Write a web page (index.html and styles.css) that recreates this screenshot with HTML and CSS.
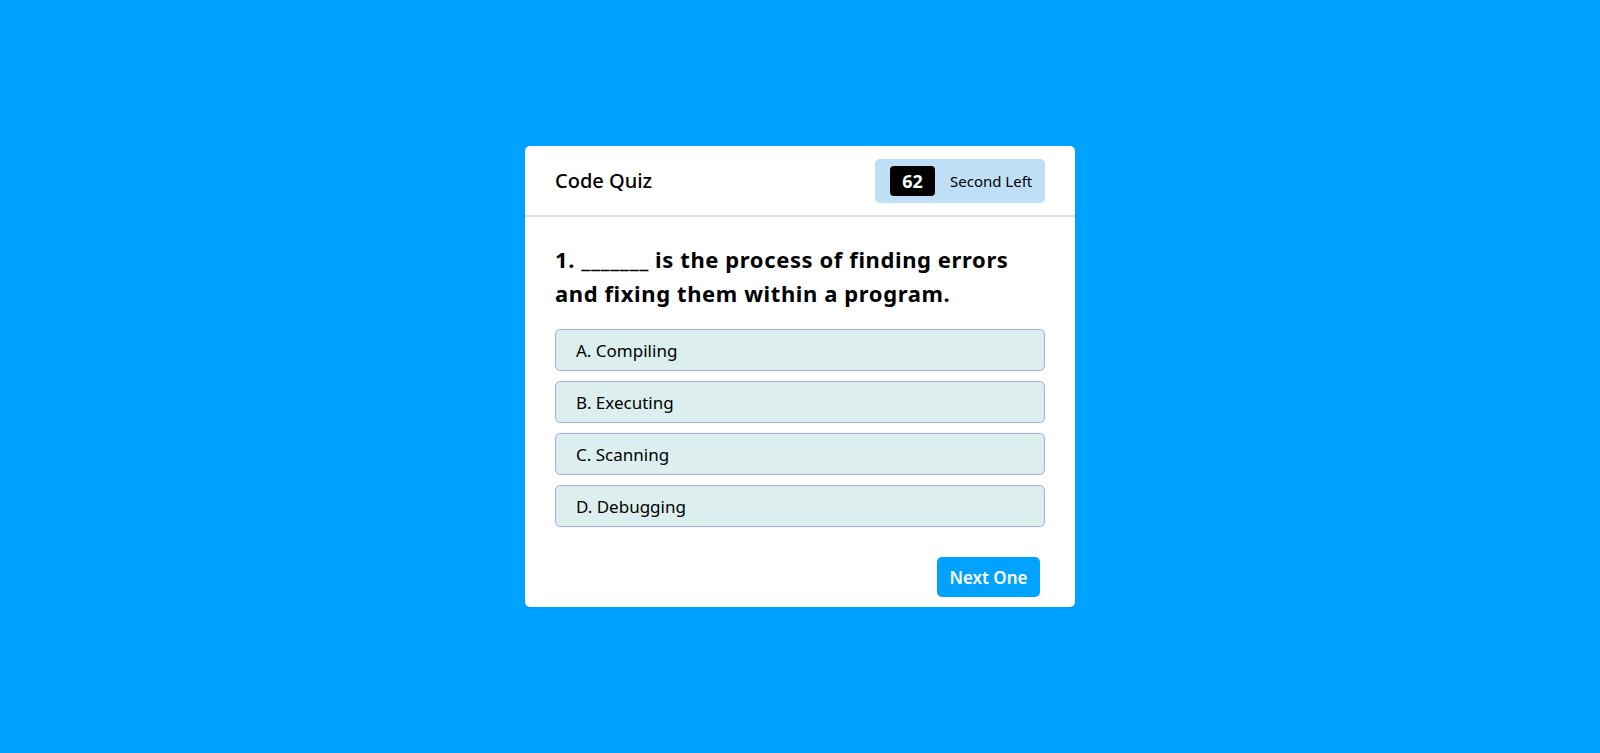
FILE: index.html
```html
<!DOCTYPE html>
<html lang="en">
<head>
<meta charset="utf-8">
<title>Code Quiz</title>
<link rel="stylesheet" href="styles.css">
</head>
<body>
<div class="quiz">
  <header class="quiz-header">
    <div class="title">Code Quiz</div>
    <div class="timer">
      <span class="timer-count">62</span>
      <span class="timer-label">Second Left</span>
    </div>
  </header>
  <section class="quiz-body">
    <h2 class="question">1. _______ is the process of finding errors and fixing them within a program.</h2>
    <div class="options">
      <div class="option">A. Compiling</div>
      <div class="option">B. Executing</div>
      <div class="option">C. Scanning</div>
      <div class="option">D. Debugging</div>
    </div>
    <div class="quiz-footer">
      <button class="next-btn">Next One</button>
    </div>
  </section>
</div>
</body>
</html>
```
FILE: styles.css
```css
* { box-sizing: border-box; }
html, body { margin: 0; height: 100%; }
body {
  background: #00a2ff;
  font-family: "Noto Sans", "Open Sans", sans-serif;
  color: #000;
  display: flex;
  align-items: center;
  justify-content: center;
}
.quiz {
  width: 550px;
  background: #fff;
  border-radius: 5px;
}
.quiz-header {
  height: 71px;
  padding: 0 30px;
  border-bottom: 2px solid #dddddd;
  display: flex;
  align-items: center;
  justify-content: space-between;
}
.title {
  font-size: 20px;
  font-weight: 500;
}
.timer {
  width: 170px;
  height: 44px;
  background: #bfdff7;
  border-radius: 5px;
  display: flex;
  align-items: center;
  padding-left: 15px;
  gap: 15px;
}
.timer-count {
  width: 45px;
  height: 30px;
  background: #000;
  color: #fff;
  border-radius: 4px;
  font-size: 18px;
  font-weight: 700;
  display: flex;
  align-items: center;
  justify-content: center;
}
.timer-label {
  font-size: 15px;
}
.quiz-body {
  padding: 25px 30px 10px;
}
.question {
  margin: 0 0 19px;
  max-width: 475px;
  font-size: 22px;
  line-height: 34px;
  font-weight: 700;
  letter-spacing: 0.6px;
}
.options {
  display: flex;
  flex-direction: column;
  gap: 10px;
}
.option {
  height: 42px;
  background: #dcefee;
  border: 1px solid #a5ade6;
  border-radius: 5px;
  padding: 0 20px;
  display: flex;
  align-items: center;
  font-size: 17px;
}
.quiz-footer {
  display: flex;
  justify-content: flex-end;
  margin-top: 30px;
  padding-right: 5px;
}
.next-btn {
  width: 103px;
  height: 40px;
  background: #00a2ff;
  color: #fff;
  border: none;
  border-radius: 5px;
  font-family: inherit;
  font-size: 17px;
  font-weight: 600;
  padding: 0;
}
```
